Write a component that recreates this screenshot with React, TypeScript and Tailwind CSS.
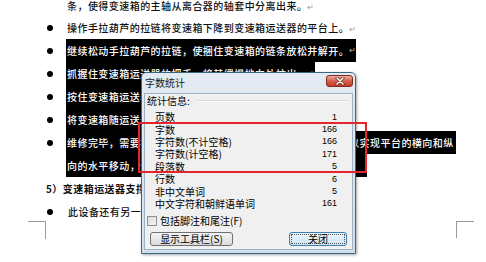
import React from "react";

interface LineProps {
    bullet?: boolean
    first?: boolean
    children: React.ReactNode
}

const Line = ({bullet = false, first = false, children}: LineProps): JSX.Element => (
    <div className={`flex items-center whitespace-nowrap ${first ? "h-[20px]" : "h-[23px]"}`}>
        <div className="flex w-[66px] shrink-0 pl-[47px]">
            {bullet && <span className="block size-[6px] rounded-full bg-black"></span>}
        </div>
        {children}
    </div>
)

const Ret = ({dark = false}: {dark?: boolean}) => (
    <span className={`font-['DejaVu_Sans',sans-serif] text-[8px] font-normal tracking-normal ${dark ? "text-[#bbbbbb]" : "text-[#999999]"}`}>↵</span>
)

const Hi = ({w, children}: {w: string, children: React.ReactNode}) => (
    <span className={`flex h-[23px] items-center overflow-hidden bg-black pl-[1px] text-white ${w}`}>{children}</span>
)

const rows: [string, string][] = [
    ["页数", "1"],
    ["字数", "166"],
    ["字符数(不计空格)", "166"],
    ["字符数(计空格)", "171"],
    ["段落数", "5"],
    ["行数", "6"],
    ["非中文单词", "5"],
    ["中文字符和朝鲜语单词", "161"],
]

const WordCountDialog = (): JSX.Element => (
    <div className="absolute left-[141px] top-[72px] flex h-[182px] w-[215px] flex-col rounded-t-[5px] border border-[#3b6780] bg-linear-to-b from-[#e3eaf2] to-[#d3dfeb] px-[2px] pb-[3px] shadow-[1px_1px_3px_rgba(0,0,0,0.35)]">
        <div className="flex h-[20px] items-start justify-between">
            <span className="pl-[1px] pt-[4px] text-[10px] leading-[12px] text-[#1a1a1a]">字数统计</span>
            <div className="mt-[2px] flex h-[12px] w-[27px] items-center justify-center rounded-[3px] border border-[#7e2a1f] bg-linear-to-b from-[#eab0a2] via-[#d5604c] to-[#c23a26]">
                <svg width="10" height="8" viewBox="0 0 10 8">
                    <path d="M2 1 L8 7 M8 1 L2 7" stroke="#6b1e14" strokeWidth="3" strokeLinecap="round" />
                    <path d="M2 1 L8 7 M8 1 L2 7" stroke="#ffffff" strokeWidth="1.6" strokeLinecap="round" />
                </svg>
            </div>
        </div>
        <div className="flex flex-1 flex-col border border-[#9fb2c4] bg-[#f0f0f0] text-[10px] text-black">
            <div className="flex h-[14px] items-center pl-[2px] pr-[3px]">
                <span className="leading-none">统计信息:</span>
                <div className="ml-[6px] h-[2px] flex-1 border-t border-b border-t-[#d5dbe1] border-b-white"></div>
            </div>
            <div className="mt-[3px] flex flex-col">
                {rows.map(([label, value]) => (
                    <div key={label} className="flex h-[12.4px] items-center justify-between pl-[10px] pr-[15px]">
                        <span className="leading-none">{label}</span>
                        <span className="font-['Liberation_Sans',sans-serif] text-[9px] leading-none">{value}</span>
                    </div>
                ))}
            </div>
            <div className="mt-[5px] flex h-[12px] items-center gap-[3px] pl-[2px]">
                <span className="block size-[10px] border border-[#8e8f8f] bg-linear-to-br from-[#d8d8d8] to-[#f8f8f8]"></span>
                <span className="leading-none">包括脚注和尾注(F)</span>
            </div>
            <div className="mt-[5px] flex items-center justify-between px-[5px]">
                <div className="flex h-[14px] w-[83px] items-center justify-center rounded-[3px] border border-[#707070] bg-linear-to-b from-[#f4f4f4] to-[#dcdcdc] leading-none">显示工具栏(S)</div>
                <div className="flex h-[14px] w-[58px] items-center justify-center rounded-[3px] border border-[#3c7fb1] bg-linear-to-b from-[#eaf6fd] to-[#cfe6f5] p-[1px]">
                    <div className="flex h-full w-full items-center justify-center border border-dotted border-[#555555] leading-none">关闭</div>
                </div>
            </div>
        </div>
    </div>
)

const App = (): JSX.Element => {
    return (
        <div className="relative h-[262px] w-[486px] overflow-hidden bg-white font-['Noto_Sans_CJK_SC',sans-serif]">
            <div className="-mt-[4px] flex flex-col text-[10px] font-medium tracking-[0.45px] text-[#111111]">
                <Line first><span className="pl-[1px]">条，使得变速箱的主轴从离合器的轴套中分离出来。<Ret /></span></Line>
                <Line bullet><span className="pl-[1px]">操作手拉葫芦的拉链将变速箱下降到变速箱运送器的平台上。<Ret /></span></Line>
                <Line bullet><Hi w="w-[290px]">继续松动手拉葫芦的拉链，使捆住变速箱的链条放松并解开。<Ret dark /></Hi></Line>
                <Line bullet><Hi w="w-[249px]">抓握住变速箱运送器的把手，将其缓慢地向外拉出。<Ret dark /></Hi></Line>
                <Line bullet><Hi w="w-[240px]">按住变速箱运送器，使其沿地面移动到位。<Ret dark /></Hi></Line>
                <Line bullet><Hi w="w-[200px]">将变速箱随运送器一起移至工作台。<Ret dark /></Hi></Line>
                <Line bullet><Hi w="w-[390px]">维修完毕，需要将变速箱装回时，可以通过调节运送器手柄，以实现平台的横向和纵</Hi></Line>
                <Line><Hi w="w-[301px]">向的水平移动，使变速箱输入轴与发动机离合器的轴套对齐。<Ret dark /></Hi></Line>
                <div className="flex h-[23px] items-center whitespace-nowrap pl-[46px] font-bold">5）变速箱运送器支撑架的使用方法<Ret /></div>
                <Line bullet><span className="pl-[2px]">此设备还有另一种使用方法，可用于支撑其他部件。<Ret /></span></Line>
                <div className="-mt-[2px] flex justify-between pl-[28px] pr-[12px]">
                    <div className="h-[18px] w-[18px] border-r border-t border-[#9a9a9a]"></div>
                    <div className="h-[17px] w-[18px] border-l border-t border-[#9a9a9a]"></div>
                </div>
            </div>
            <WordCountDialog />
            <div className="absolute left-[138px] top-[122px] h-[51px] w-[229px] border-2 border-[#e3262b]"></div>
        </div>
    )
}

export default App;
